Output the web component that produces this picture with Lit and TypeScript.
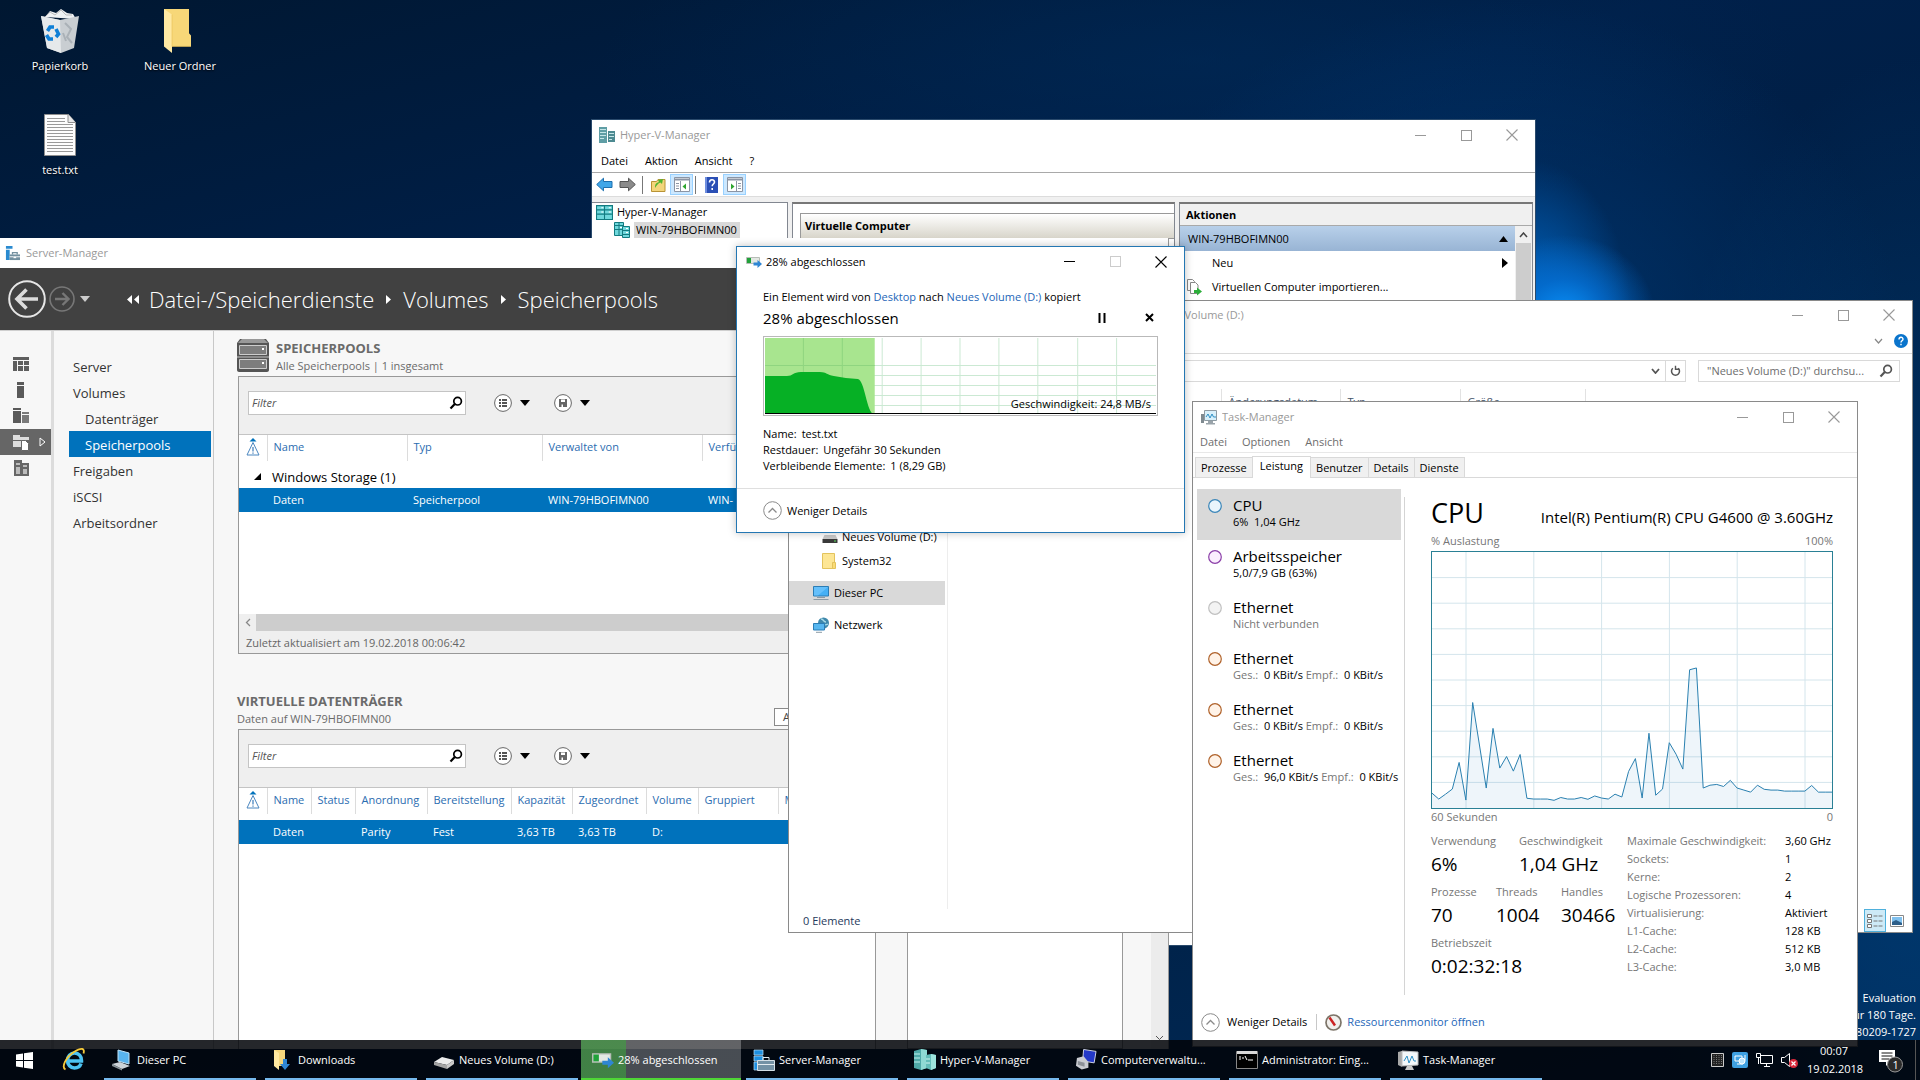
import { LitElement, html, css, svg, nothing } from "lit";
import { customElement } from "lit/decorators.js";
import { classMap } from "lit/directives/class-map.js";

/* ---------- shared styles ---------- */

const base = css`
  :host {
    display: block;
    box-sizing: border-box;
    font-family: "Open Sans", "Noto Sans", sans-serif;
    font-size: 11px;
    line-height: 16px;
    color: #000;
    cursor: default;
  }
  *, *::before, *::after { box-sizing: border-box; }
  button, input { font: inherit; color: inherit; margin: 0; border: 0; padding: 0; background: none; border-radius: 0; outline: none; }
  button { text-align: left; white-space: nowrap; }
  a { color: #1d66b8; text-decoration: none; }
  svg { display: block; flex: none; }
  table { border-collapse: collapse; border-spacing: 0; }
  th, td { padding: 0; text-align: left; font-weight: 400; white-space: nowrap; }
  ul { list-style: none; margin: 0; padding: 0; }
  h1, h2, h3, p, dl, dd, dt { margin: 0; font-weight: 400; font-size: inherit; }
  .titlebar { display: flex; align-items: center; height: 30px; color: #999; white-space: nowrap; }
  .titlebar .caption { flex: 1; overflow: hidden; }
  .controls { display: flex; }
  .controls button { width: 46px; height: 30px; display: grid; place-items: center; }
`;

const windowControls = (color: string, maxColor = color) => html`
  <div class="controls">
    <button aria-label="Minimieren"><svg width="11" height="11"><path d="M0 5.5H11" stroke=${color} fill="none" /></svg></button>
    <button aria-label="Maximieren"><svg width="11" height="11"><rect x=".5" y=".5" width="10" height="10" stroke=${maxColor} fill="none" /></svg></button>
    <button aria-label="Schließen"><svg width="12" height="12"><path d="M.5 .5L11.5 11.5M11.5 .5L.5 11.5" stroke=${color} stroke-width="1.1" fill="none" /></svg></button>
  </div>`;

const chevronCircle = html`<svg width="19" height="19" viewBox="0 0 19 19"><circle cx="9.5" cy="9.5" r="8.8" fill="#fff" stroke="#8a8a8a" /><path d="M5.500 11.500l4-4 4 4" fill="none" stroke="#8a8a8a" stroke-width="1.3" /></svg>`;

/* ---------- icons ---------- */

const hyperVIcon = (s: number) => html`<svg width=${s} height=${s} viewBox="0 0 16 16">
  <path d="M0 0h8v16H0z" fill="#5f9ea5" /><path d="M1 2h6v1H1zm0 3h6v1H1zm0 3h6v1H1zm0 3h4v1H1z" fill="#c5e6e8" />
  <path d="M9 4h7v11H9z" fill="#4d8a91" /><path d="M10 6h5v1h-5zm0 3h5v1h-5zm0 3h3v1h-3z" fill="#c5e6e8" /></svg>`;

const serverIcon = (s: number) => html`<svg width=${s} height=${s} viewBox="0 0 16 16">
  <path d="M1 0h7v3H1zM1 4h4v11H1z" fill="#2a8ad0" /><path d="M5 9h11v6H5z" fill="#73909f" />
  <path d="M8 9V7h5v2" fill="none" stroke="#73909f" stroke-width="1.4" /><path d="M5 11.500h4m3 0h4" stroke="#fff" /><path d="M9 11h3v2H9z" fill="#fff" /></svg>`;

const copyIcon = (w: number) => html`<svg width=${w} height=${w} viewBox="0 0 16 16">
  <path d="M.5 3.500h13v6H.5z" fill="#e3e8e3" stroke="#b7bdb7" /><path d="M1 4h4v5H1z" fill="#21a23a" />
  <path d="M7.500 8.500h4V6l4.500 4-4.500 4v-2.500h-4z" fill="#2f86d4" /></svg>`;

const folderIcon = (w: number, h: number) => html`<svg width=${w} height=${h} viewBox="0 0 28 40" preserveAspectRatio="none">
  <path d="M0 0h25v22l2 2v10H8z" fill="#f7d778" /><path d="M0 0l8 5v35l-8-6z" fill="#ffe9a3" /><path d="M8 5v29h19" fill="none" stroke="#e9bf55" stroke-width=".6" /></svg>`;

const smallFolderIcon = html`<svg width="14" height="16" viewBox="0 0 14 16"><path d="M.5 .5h12v15H.5z" fill="#fde694" stroke="#e3c35c" /><path d="M10.500 9.500h3v6h-3z" fill="#fbdc76" stroke="#e3c35c" /></svg>`;

const magnifier = (color: string) => html`<svg width="14" height="14" viewBox="0 0 14 14"><circle cx="8.600" cy="5.200" r="3.800" fill="none" stroke=${color} stroke-width="1.7" /><path d="M5.800 8L1.500 12.500" stroke=${color} stroke-width="2.2" /></svg>`;

const monitorIcon = html`<svg width="16" height="16" viewBox="0 0 16 16"><path d="M.5 1.500h15v9.500H.5z" fill="#45b0f5" stroke="#2b7db5" /><path d="M1 2h14L5 10.500H1z" fill="#7ccbff" opacity=".6" /><path d="M4 12.500h8M.5 14.500h15" stroke="#8d9ba5" /></svg>`;

const networkIcon = html`<svg width="16" height="16" viewBox="0 0 16 16"><circle cx="10.500" cy="6" r="5.500" fill="#3f88ab" /><path d="M8 2c3 0 2 3 5 3m-5 3c3-1 4 1 7-1" stroke="#a8dbe8" fill="none" stroke-width="1.4" /><path d="M.5 6.500h11v6.500H.5z" fill="#57b7f0" stroke="#2b7db5" /><path d="M3 15.300h6" stroke="#8d9ba5" /></svg>`;

const driveIcon = (s: number) => html`<svg width=${s} height=${s} viewBox="0 0 16 16"><path d="M2.500 6h11l2 4H.5z" fill="#c9c9c9" /><path d="M.5 10h15v4H.5z" fill="#3a3a3a" /><path d="M12 12h2" stroke="#5fe05f" stroke-width="1.2" /></svg>`;

const taskMgrIcon = (s: number) => html`<svg width=${s} height=${s} viewBox="0 0 16 16"><path d="M0 5h3v9H0z" fill="#7f8a90" /><path d="M3.500 1.500h12v10h-12z" fill="#d8f0fb" stroke="#8d9aa2" /><path d="M5 8l2-3 2 4 2-4 1.500 3H15" fill="none" stroke="#2d8fc4" /><path d="M7 12h5v2h2v1.500H5V14h2z" fill="#9aa4aa" /></svg>`;

/* ---------- Hyper-V manager ---------- */

@customElement("hyperv-manager")
export class HyperVManager extends LitElement {
  static styles = [base, css`
    :host { background: #f0f0f0; display: flex; flex-direction: column; border: 1px solid #2a4a6c; }
    .titlebar, .menu, .tools { background: #fff; }
    .titlebar { padding-left: 7px; gap: 5px; }
    .menu { display: flex; height: 23px; align-items: center; gap: 17px; padding-left: 9px; border-bottom: 1px solid #a9a9a9; }
    .tools { display: flex; height: 24px; align-items: center; padding-left: 1px; border-bottom: 1px solid #dcdcdc; }
    .tools button { width: 23px; height: 21px; display: grid; place-items: center; }
    .tools .on { background: #cce8ff; border: 1px solid #99d1ff; }
    .rule { width: 1px; height: 18px; background: #777; margin: 0 4px 0 3px; }
    .rule.tight { margin: 0 4px 0 2px; }
    .panes { display: flex; flex: 1; gap: 4px; padding-top: 5px; }
    .tree { width: 196px; background: #fff; border: 1px solid #828790; border-left: 0; }
    .tree li { display: flex; align-items: center; gap: 4px; height: 18px; padding-left: 4px; }
    .tree li.child { padding-left: 22px; }
    .tree .sel { background: #d9d9d9; padding: 0 3px 0 2px; }
    .middle { flex: 1; background: #fff; border: 1px solid #828790; border-top: 2px solid #777; padding: 9px 0 0 7px; }
    .band { height: 26px; border: 1px solid #999; border-right: 0; background: linear-gradient(#fff, #d8d5ca); font-weight: 700; padding: 4px; }
    .inner { height: 20px; margin-right: 5px; border-right: 1px solid #999; }
    .actions { width: 354px; background: #fff; border: 1px solid #828790; border-top: 2px solid #777; margin-right: 2px; display: flex; flex-direction: column; }
    .head { height: 22px; background: #f0f0f0; border-bottom: 1px solid #a9a9a9; padding: 3px 6px; font-weight: 700; }
    .cols { display: flex; flex: 1; }
    .list { flex: 1; }
    .list button { display: flex; align-items: center; width: 100%; height: 24px; padding: 0 7px 0 6px; gap: 10px; }
    .list .host { height: 25px; background: linear-gradient(#b8d0ea, #98b4d4); padding-left: 8px; }
    .list span { flex: 1; }
    .list .plain { padding-left: 32px; }
    .scroll { width: 17px; background: #cdcdcd; border: 1px solid #f0f0f0; }
    .up { height: 16px; background: #f0f0f0; display: grid; place-items: center; }
    .status { height: 20px; background: #fff; }
  `];

  render() {
    const cabinet = (w: number) => html`<svg width=${w} height=${w} viewBox="0 0 16 16"><path d="M.5 1.500h7.500v13H.5zM8 1.500h7.500v13H8z" fill="#6fd8dc" stroke="#127b80" /><path d="M1 5.500h14M1 9.500h14" stroke="#127b80" /><path d="M5 3.500h2m5 0h2M5 7.500h2m5 0h2" stroke="#fff" /></svg>`;
    const cabinets = html`<svg width="16" height="16" viewBox="0 0 16 16"><path d="M.5 .5h9v13h-9z" fill="#6fd8dc" stroke="#127b80" /><path d="M1 3.500h8M1 7.500h8M5 1v12" stroke="#127b80" /><path d="M8.500 4.500h7v11h-7z" fill="#6fd8dc" stroke="#127b80" /><path d="M9 8.500h6M9 12.500h6" stroke="#127b80" /><path d="M12 6.500h2M12 10.500h2M6 5.500h2" stroke="#fff" /></svg>`;
    const paneIcon = (left: boolean) => html`<svg width="16" height="15" viewBox="0 0 16 15"><path d="M.5 .5h15v14H.5z" fill="#fff" stroke="#8b95a5" /><path d="M1 2.500h14" stroke="#8b95a5" stroke-width="2" /><path d=${left ? "M6.500 4v10" : "M9.500 4v10"} stroke="#8b95a5" /><path d=${left ? "M2 6.500h3M2 9h3M2 11.500h3" : "M11 6.500h3M11 9h3M11 11.500h3"} stroke="#8b95a5" /><path d=${left ? "M12 6.500v6L8.500 9.500z" : "M4 6.500v6l3.500-3z"} fill="#2fa52f" /></svg>`;
    return html`
      <div class="titlebar">${hyperVIcon(16)}<span class="caption">Hyper-V-Manager</span>${windowControls("#999")}</div>
      <div class="menu"><button>Datei</button><button>Aktion</button><button>Ansicht</button><button>?</button></div>
      <div class="tools">
        <button aria-label="Zurück"><svg width="17" height="15" viewBox="0 0 17 15"><path d="M.7 7.500L7.500 1.200V4.500h8.500v6H7.500v3.300z" fill="#3fa6e8" stroke="#1c6fae" /></svg></button>
        <button aria-label="Vorwärts"><svg width="17" height="15" viewBox="0 0 17 15"><path d="M16.300 7.500L9.500 1.200V4.500H1v6h8.500v3.300z" fill="#8b8b8b" stroke="#555" /></svg></button>
        <span class="rule"></span>
        <button aria-label="Nach oben"><svg width="15" height="15" viewBox="0 0 15 15"><path d="M.5 4.500h5l1.500-2h7v12H.5z" fill="#f3d57c" stroke="#b99335" /><path d="M4 11c0-4 1-5 4-6L7 3l5-1-1 5-1.500-1.500C7 6.500 6 8 4 11z" fill="#4fb52f" /></svg></button>
        <button class="on" aria-label="Konsolenstruktur">${paneIcon(true)}</button>
        <span class="rule tight"></span>
        <button aria-label="Hilfe"><svg width="13" height="16" viewBox="0 0 13 16"><path d="M0 0h13v16H0z" fill="#2a4fb5" /><path d="M0 0h2v16H0z" fill="#6f8ede" /><path d="M4.500 5.500c0-3.500 5-3.500 5-.5 0 2-2.300 2-2.300 4.200M7.200 11v2" stroke="#fff" stroke-width="1.600" fill="none" /></svg></button>
        <button class="on" aria-label="Aktionsbereich">${paneIcon(false)}</button>
      </div>
      <div class="panes">
        <ul class="tree">
          <li>${cabinet(17)}Hyper-V-Manager</li>
          <li class="child">${cabinets}<span class="sel">WIN-79HBOFIMN00</span></li>
        </ul>
        <div class="middle"><h2 class="band">Virtuelle Computer</h2><div class="inner"></div></div>
        <div class="actions">
          <h2 class="head">Aktionen</h2>
          <div class="cols">
            <div class="list">
              <button class="host"><span>WIN-79HBOFIMN00</span><svg width="9" height="6"><path d="M0 6h9L4.500 0z" /></svg></button>
              <button class="plain"><span>Neu</span><svg width="6" height="10"><path d="M0 0v10l6-5z" /></svg></button>
              <button><svg width="16" height="17" viewBox="0 0 16 17"><path d="M1.500 .5h5l2 2v9h-7z" fill="#fff" stroke="#888" /><path d="M4.500 3.500h5l2.500 2.500v8.500H4.500z" fill="#fff" stroke="#888" /><path d="M8 11h3V8.500l5 4-5 4V14H8z" fill="#2cae3a" /></svg><span>Virtuellen Computer importieren...</span></button>
            </div>
            <div class="scroll"><div class="up"><svg width="9" height="6"><path d="M1 5l3.500-4L8 5" fill="none" stroke="#444" stroke-width="1.500" /></svg></div></div>
          </div>
        </div>
      </div>
      <div class="status"></div>`;
  }
}

/* ---------- Server manager ---------- */

interface NavItem { label: string; sub?: boolean; active?: boolean; }

const NAV: NavItem[] = [
  { label: "Server" }, { label: "Volumes" }, { label: "Datenträger", sub: true },
  { label: "Speicherpools", sub: true, active: true }, { label: "Freigaben" },
  { label: "iSCSI" }, { label: "Arbeitsordner" },
];

@customElement("server-manager")
export class ServerManager extends LitElement {
  static styles = [base, css`
    :host { background: #f7f7f7; display: flex; flex-direction: column; border-right: 1px solid #999; overflow: hidden; }
    .titlebar { background: #fff; padding-left: 5px; gap: 6px; }
    .banner { height: 63px; background: #414141; display: flex; align-items: center; color: #f3f3f3; padding-left: 8px; border-bottom: 1px solid #cfcfcf; flex: none; }
    .history { display: flex; align-items: center; gap: 3px; width: 119px; }
    .crumbs { display: flex; align-items: center; gap: 12px; font-size: 22px; line-height: 32px; font-weight: 300; }
    .crumbs a { color: #fff; }
    .back { margin-right: -2px; }
    .body { display: flex; flex: 1; min-height: 0; }
    .rail { width: 54px; border-right: 3px solid #dcdcdc; padding-top: 20px; flex: none; }
    .rail button { display: flex; width: 100%; height: 26px; align-items: center; padding-left: 13px; gap: 10px; }
    .rail .active { background: #666; }
    .nav { width: 160px; border-right: 1px solid #c8c8c8; padding: 22px 2px 0 15px; flex: none; }
    .nav a { display: flex; align-items: center; height: 26px; padding: 1px 0 0 4px; font-size: 13px; color: #333; }
    .nav .sub { padding-left: 16px; }
    .nav .active { background: #0072bc; color: #fff; }
    .main { flex: 1; display: flex; padding: 7px 28px 0 24px; gap: 31px; min-width: 0; }
    .col { width: 638px; display: flex; flex-direction: column; gap: 37px; }
    .side { flex: 1; background: #fff; border: 1px solid #999; margin-top: 38px; }
    .head { display: flex; height: 38px; gap: 7px; align-items: flex-start; color: #6a6a6a; margin-left: -1px; }
    .head .names { flex: 1; line-height: 18px; padding-top: 1px; }
    .head h2 { font-size: 13px; font-weight: 700; line-height: 18px; }
    .head .tasks { border: 1px solid #8a8a8a; height: 18px; width: 102px; padding-left: 8px; margin-top: 17px; color: #444; line-height: 16px; background: #fff; }
    .panel { border: 1px solid #999; background: #fff; display: flex; flex-direction: column; }
    .panel.pools { height: 278px; }
    .panel.disks { height: 400px; }
    .filterbar { height: 58px; background: #efefef; border-bottom: 1px solid #c4c4c4; padding: 14px 9px 0; display: flex; align-items: flex-start; flex: none; }
    .filter { display: flex; align-items: center; width: 218px; height: 24px; background: #fff; border: 1px solid #c4c4c4; padding-right: 2px; }
    .filter input { flex: 1; min-width: 0; padding-left: 3px; font-style: italic; }
    .filter input::placeholder { color: #555; opacity: 1; }
    .menu { display: flex; align-items: center; gap: 8px; height: 24px; margin-left: 28px; }
    .menu + .menu { margin-left: 24px; }
    table { table-layout: fixed; width: 100%; }
    th { height: 26px; color: #2b6cb0; padding: 0 0 2px 6px; border-left: 1px solid #dcdcdc; overflow: hidden; }
    th:first-child { border-left: 0; padding-left: 7px; }
    td { height: 24px; padding-left: 6px; color: #fff; overflow: hidden; }
    .picked { background: #0072bc; }
    .group td { height: 27px; font-size: 13px; color: #000; padding: 4px 0 0 5px; }
    .gap td { height: 6px; padding: 0; }
    .scroll { display: flex; height: 17px; margin-top: auto; background: #cdcdcd; }
    .scroll span { width: 17px; background: #efefef; display: grid; place-items: center; }
    .foot { height: 22px; background: #efefef; color: #666; padding: 4px 7px 0; }
    .c0 { width: 28px; } .p1 { width: 140px; } .p2 { width: 135px; } .p3 { width: 160px; }
    .d1, .d2 { width: 44px; } .d3 { width: 72px; } .d4 { width: 84px; } .d5 { width: 61px; } .d6 { width: 74px; } .d7 { width: 52px; } .d8 { width: 80px; }
    .vscroll { width: 17px; background: #ececec; display: flex; align-items: flex-end; justify-content: center; padding-bottom: 8px; flex: none; }
  `];

  private filterBar(id: string) {
    const caret = html`<svg width="10" height="6"><path d="M0 0h10L5 6z" /></svg>`;
    return html`<div class="filterbar">
      <label class="filter" for=${id}><input id=${id} type="text" placeholder="Filter" aria-label="Filter" />${magnifier("#000")}</label>
      <button class="menu" aria-label="Ansicht"><svg width="18" height="18" viewBox="0 0 18 18"><circle cx="9" cy="9" r="8.400" fill="#fff" stroke="#666" /><path d="M5 6h2m1 0h5M5 9h2m1 0h5M5 12h2m1 0h5" stroke="#555" stroke-width="1.800" /></svg>${caret}</button>
      <button class="menu" aria-label="Abfrage speichern"><svg width="18" height="18" viewBox="0 0 18 18"><circle cx="9" cy="9" r="8.400" fill="#fff" stroke="#666" /><path d="M5 5h8v8H5z" fill="#666" /><path d="M7 5.500h4v2.500H7zM7.500 10.500h1.500V13H7.500z" fill="#fff" /></svg>${caret}</button>
    </div>`;
  }

  private warn = html`<svg width="14" height="18" viewBox="0 0 14 18"><path d="M3.500 3.500L7 0l3.500 3.500z" fill="#0072bc" /><path d="M7 4.500l6 12.500H1z" fill="none" stroke="#4a86bf" /><path d="M7 9v4.500M7 14.500v1.200" stroke="#4a86bf" stroke-width="1.300" /></svg>`;

  render() {
    const arrow = html`<svg width="5" height="9" viewBox="0 0 5 9"><path d="M0 0v9l5-4.500z" fill="#fff" /></svg>`;
    const rail = [
      svg`<path d="M0 1h16v3H0zM0 5h4v10H0zM5 5h5v4H5zM11 5h5v4h-5zM5 10h5v5H5zM11 10h5v5h-5z" fill="#5e5e5e"/>`,
      svg`<path d="M4 0h7v3H4zM4 4h7v12H4z" fill="#5a5a5a"/>`,
      svg`<path d="M0 0h8v2H0zM0 3h8v12H0z" fill="#5a5a5a"/><path d="M9 4h7v2H9zM9 7h7v8H9z" fill="#7a7a7a"/>`,
      svg`<path d="M0 1h7v2h9v3H0zM0 7h8v6H0z" fill="#ddd"/><path d="M8.500 6.500h4l3 3v7h-7z" fill="#fff" stroke="#666"/>`,
      svg`<path d="M1 0h8v3h7v13H1z" fill="#666"/><path d="M3 3h4v2H3zM3 7h4v7H3zM10 5h4v2h-4zM10 9h4v5h-4z" fill="#bbb"/>`,
    ];
    return html`
      <div class="titlebar">${serverIcon(15)}<span class="caption">Server-Manager</span></div>
      <div class="banner">
        <div class="history">
          <button aria-label="Zurück"><svg width="38" height="38" viewBox="0 0 38 38"><circle cx="19" cy="19" r="17.800" fill="none" stroke="#e6e6e6" stroke-width="2" /><path d="M9 19h21M18.500 9.500L9 19l9.500 9.500" fill="none" stroke="#dcdcdc" stroke-width="3.600" /></svg></button>
          <button aria-label="Vorwärts"><svg width="26" height="26" viewBox="0 0 26 26"><circle cx="13" cy="13" r="12" fill="none" stroke="#777" stroke-width="1.600" /><path d="M6 13h13M13.500 7l6 6-6 6" fill="none" stroke="#777" stroke-width="2.400" /></svg></button>
          <button aria-label="Verlauf"><svg width="14" height="7"><path d="M2 0h10L7 6z" fill="#ccc" /></svg></button>
        </div>
        <nav class="crumbs">
          <svg class="back" width="12" height="9" viewBox="0 0 12 9"><path d="M5 0v9L0 4.500zM12 0v9L7 4.500z" fill="#fff" /></svg>
          <a href="#">Datei-/Speicherdienste</a>${arrow}<a href="#">Volumes</a>${arrow}<a href="#">Speicherpools</a>
        </nav>
      </div>
      <div class="body">
        <div class="rail">${rail.map((icon, i) => html`<button class=${i === 3 ? "active" : ""} aria-label="Bereich ${i + 1}"><svg width="16" height="17" viewBox="0 0 16 17">${icon}</svg>${i === 3 ? html`<svg width="7" height="10"><path d="M1 1v8l5-4z" fill="none" stroke="#fff" /></svg>` : nothing}</button>`)}</div>
        <nav class="nav">${NAV.map((n) => html`<a href="#" class=${classMap({ sub: !!n.sub, active: !!n.active })}>${n.label}</a>`)}</nav>
        <div class="main">
          <div class="col">
            <section>
              <div class="head">
                <svg width="32" height="34" viewBox="0 0 32 34"><path d="M3 1h26l3 4v27c0 1-1 2-2 2H2c-1 0-2-1-2-2V5z" fill="#555" /><path d="M5 1h22l4 4H1z" fill="#999" /><path d="M2.500 7.500h27v9h-27zM2.500 21.500h27v9h-27z" fill="#7d7d7d" stroke="#ccc" /><path d="M25 10h2v2h-2zM25 24h2v2h-2z" fill="#fff" /><path d="M0 19h32" stroke="#f7f7f7" stroke-width=".7" /></svg>
                <div class="names"><h2>SPEICHERPOOLS</h2><p>Alle Speicherpools | 1 insgesamt</p></div>
              </div>
              <div class="panel pools">
                ${this.filterBar("filter-pools")}
                <table>
                  <colgroup><col class="c0" /><col class="p1" /><col class="p2" /><col class="p3" /><col /></colgroup>
                  <thead><tr><th>${this.warn}</th><th>Name</th><th>Typ</th><th>Verwaltet von</th><th>Verfü</th></tr></thead>
                  <tbody>
                    <tr class="group"><td><svg width="18" height="8" viewBox="0 0 18 8"><path d="M17 0v7h-7z" /></svg></td><td colspan="4">Windows Storage (1)</td></tr>
                    <tr class="picked"><td></td><td>Daten</td><td>Speicherpool</td><td>WIN-79HBOFIMN00</td><td>WIN-</td></tr>
                  </tbody>
                </table>
                <div class="scroll"><span><svg width="6" height="9"><path d="M5 1L1.500 4.500 5 8" fill="none" stroke="#888" stroke-width="1.300" /></svg></span></div>
                <div class="foot">Zuletzt aktualisiert am 19.02.2018 00:06:42</div>
              </div>
            </section>
            <section>
              <div class="head">
                <div class="names"><h2>VIRTUELLE DATENTRÄGER</h2><p>Daten auf WIN-79HBOFIMN00</p></div>
                <button class="tasks">AUFGABEN</button>
              </div>
              <div class="panel disks">
                ${this.filterBar("filter-disks")}
                <table>
                  <colgroup><col class="c0" /><col class="d1" /><col class="d2" /><col class="d3" /><col class="d4" /><col class="d5" /><col class="d6" /><col class="d7" /><col class="d8" /><col /></colgroup>
                  <thead><tr><th>${this.warn}</th>${["Name", "Status", "Anordnung", "Bereitstellung", "Kapazität", "Zugeordnet", "Volume", "Gruppiert", "Mit"].map((t) => html`<th>${t}</th>`)}</tr></thead>
                  <tbody>
                    <tr class="gap"><td colspan="10"></td></tr>
                    <tr class="picked">${["", "Daten", "", "Parity", "Fest", "3,63 TB", "3,63 TB", "D:", "", ""].map((t) => html`<td>${t}</td>`)}</tr>
                  </tbody>
                </table>
              </div>
            </section>
          </div>
          <div class="side"></div>
        </div>
        <div class="vscroll"><svg width="9" height="6"><path d="M1 1l3.500 3.500L8 1" fill="none" stroke="#555" /></svg></div>
      </div>`;
  }
}

/* ---------- Explorer ---------- */

@customElement("explorer-window")
export class ExplorerWindow extends LitElement {
  static styles = [base, css`
    :host { background: #fff; border: 1px solid #8a8a8a; display: flex; flex-direction: column; }
    .titlebar { padding-left: 360px; height: 28px; }
    .ribbon { height: 25px; display: flex; justify-content: flex-end; align-items: center; gap: 11px; padding-right: 4px; border-bottom: 1px solid #dadada; }
    .location { display: flex; gap: 12px; padding: 6px 12px 7px; }
    .field { display: flex; align-items: center; height: 22px; border: 1px solid #d9d9d9; }
    .address { flex: 1; }
    .address input { flex: 1; height: 20px; }
    .address .reload { width: 20px; height: 20px; margin-left: 5px; border-left: 1px solid #d9d9d9; display: grid; place-items: center; }
    .search { width: 202px; padding: 0 6px 0 8px; }
    .search input { flex: 1; min-width: 0; }
    .search input::placeholder { color: #6d6d6d; opacity: 1; }
    .body { display: flex; flex: 1; }
    .tree { width: 159px; border-right: 1px solid #ededed; padding: 136px 2px 0 0; }
    .tree li { display: flex; align-items: center; height: 24px; gap: 5px; padding-left: 24px; margin-bottom: 8px; }
    .tree .sub { padding-left: 33px; margin-bottom: 0; gap: 4px; }
    .tree .last { margin-bottom: 8px; gap: 6px; }
    .tree .sel { background: #d9d9d9; }
    .files { flex: 1; padding-left: 24px; }
    table { table-layout: fixed; width: 614px; color: #44546a; }
    th { height: 26px; border-right: 1px solid #e2e2e2; padding-left: 7px; }
    .name { width: 249px; } .date { width: 119px; } .type { width: 120px; }
    .status { display: flex; height: 23px; align-items: center; padding-left: 14px; color: #1e395b; }
    .status span { flex: 1; }
    .status button { width: 22px; height: 23px; display: grid; place-items: center; }
    .status .on { border: 1px solid #4fb0dc; background: #cdeaf7; }
    .status .last { width: 26px; padding-right: 4px; }
  `];

  render() {
    return html`
      <div class="titlebar"><span class="caption">Neues Volume (D:)</span>${windowControls("#999")}</div>
      <div class="ribbon">
        <svg width="9" height="6"><path d="M1 1l3.500 4L8 1" fill="none" stroke="#888" stroke-width="1.200" /></svg>
        <svg width="14" height="14" viewBox="0 0 14 14"><circle cx="7" cy="7" r="7" fill="#0a74cc" /><path d="M5 5.500c0-3 4-3 4-.3 0 1.600-2 1.600-2 3.300M7 9.800v1.500" fill="none" stroke="#fff" stroke-width="1.400" /></svg>
      </div>
      <div class="location">
        <div class="field address"><input type="text" aria-label="Adresse" />
          <svg width="9" height="6"><path d="M1 1l3.500 4L8 1" fill="none" stroke="#555" stroke-width="1.800" /></svg>
          <button class="reload" aria-label="Aktualisieren"><svg width="11" height="12" viewBox="0 0 11 12"><path d="M8.200 3.200a4 4 0 1 1-5.400 0" fill="none" stroke="#555" stroke-width="1.500" /><path d="M5.500 .8v3.500h3.800" fill="none" stroke="#555" stroke-width="1.400" /></svg></button>
        </div>
        <label class="field search"><input type="text" aria-label="Suchen" placeholder='"Neues Volume (D:)" durchsu...' />${magnifier("#555")}</label>
      </div>
      <div class="body">
        <ul class="tree">
          <li class="sub">${driveIcon(16)}Neues Volume (D:)</li>
          <li class="sub last">${smallFolderIcon}System32</li>
          <li class="sel">${monitorIcon}Dieser PC</li>
          <li>${networkIcon}Netzwerk</li>
        </ul>
        <div class="files">
          <table><colgroup><col class="name" /><col class="date" /><col class="type" /><col /></colgroup>
            <thead><tr><th></th><th>Änderungsdatum</th><th>Typ</th><th>Größe</th></tr></thead></table>
        </div>
      </div>
      <div class="status"><span>0 Elemente</span>
        <button class="on" aria-label="Details"><svg width="16" height="14" viewBox="0 0 16 14"><path d="M.5 .5h4v3h-4zM.5 5.500h4v3h-4zM.5 10.500h4v3h-4z" fill="#fff" stroke="#777" /><path d="M6.500 2h4m1 0h4M6.500 7h4m1 0h4M6.500 12h4m1 0h4" stroke="#777" /></svg></button>
        <button class="last" aria-label="Kacheln"><svg width="14" height="12" viewBox="0 0 14 12"><path d="M.5 .5h13v11H.5z" fill="#fff" stroke="#888" /><path d="M2 2h10v8H2z" fill="#7fc0ee" /><path d="M2 7l4-2 6 3v2H2z" fill="#2e5f8a" /></svg></button>
      </div>`;
  }
}

/* ---------- Task manager ---------- */

const CPU_LOAD = [5.8, 3.5, 5.4, 7.4, 17.8, 3.1, 41.2, 24.6, 7.8, 31.1, 15.6, 20.1, 14.4, 20.9, 3.8, 3.5, 3.5, 3.5, 3, 4.1,
  3.5, 3.5, 4.1, 3.4, 4.7, 3.9, 3.5, 5.4, 4.3, 14.3, 19.3, 3.9, 29.2, 5, 7.4, 25.5, 21, 15.2, 54, 54.7,
  7.8, 8.9, 9.2, 8.4, 10.8, 7.8, 7, 6.2, 8.9, 7.3, 7, 7, 6.6, 6.6, 6.6, 6.6, 8.8, 6.2, 6.2, 6.2];

const SPECS: [string, string][] = [
  ["Maximale Geschwindigkeit:", "3,60 GHz"], ["Sockets:", "1"], ["Kerne:", "2"], ["Logische Prozessoren:", "4"],
  ["Virtualisierung:", "Aktiviert"], ["L1-Cache:", "128 KB"], ["L2-Cache:", "512 KB"], ["L3-Cache:", "3,0 MB"],
];

@customElement("task-manager")
export class TaskManager extends LitElement {
  static styles = [base, css`
    :host { background: #fff; border: 1px solid #8a8a8a; display: flex; flex-direction: column; }
    .titlebar { padding-left: 8px; gap: 5px; }
    .menu { display: flex; gap: 15px; height: 21px; align-items: center; padding-left: 7px; color: #6d6d6d; border-bottom: 1px solid #e8e8e8; }
    .tabs { display: flex; align-items: flex-end; height: 25px; padding-left: 2px; border-bottom: 1px solid #d9d9d9; }
    .tabs button { height: 20px; padding: 0 5px; border: 1px solid #d9d9d9; border-bottom: 0; background: #f0f0f0; margin-right: -1px; }
    .tabs .active { height: 22px; padding: 0 7px 3px; background: #fff; margin-bottom: -1px; }
    .body { display: flex; flex: 1; padding-top: 11px; }
    .list { width: 204px; margin-left: 4px; }
    .list button { display: flex; width: 100%; height: 51px; gap: 11px; padding: 7px 0 0 11px; align-items: flex-start; }
    .list .active { background: #d9d9d9; }
    .list h3 { font-size: 15px; line-height: 18px; }
    .list p { white-space: nowrap; line-height: 16px; }
    .list svg { margin-top: 3px; }
    .muted { color: #767676; }
    .detail { flex: 1; margin: 8px 0 3px 3px; border-left: 1px solid #d4d4d4; padding: 0 24px 0 26px; }
    .top { display: flex; justify-content: space-between; align-items: baseline; line-height: 32px; font-size: 15px; }
    .top h2 { font-size: 27px; }
    .legend { display: flex; justify-content: space-between; color: #767676; line-height: 16px; }
    .chart { width: 100%; height: 258px; border: 1px solid #2a8095; margin-top: 2px; }
    .stats { display: flex; margin-top: 8px; }
    .group { width: 196px; }
    .row { display: flex; height: 51px; }
    .row dl { min-width: 65px; white-space: nowrap; }
    .row.wide dl { min-width: 88px; }
    .row dd { font-size: 19px; line-height: 30px; }
    dt, th { color: #767676; }
    table { height: 144px; }
    td, th { height: 18px; padding-bottom: 2px; }
    th { width: 158px; }
    .foot { display: flex; align-items: center; height: 48px; padding-left: 8px; gap: 8px; }
    .foot button, .foot a { display: flex; align-items: center; gap: 7px; }
    .foot a { border-left: 1px solid #c8c8c8; padding-left: 8px; gap: 5px; margin-left: 1px; height: 16px; }
  `];

  private ring(stroke: string, fill: string) {
    return html`<svg width="14" height="14" viewBox="0 0 14 14"><circle cx="7" cy="7" r="6.300" fill=${fill} stroke=${stroke} stroke-width="1.200" /></svg>`;
  }

  private eth(sent: string) {
    return html`<button>${this.ring("#b0622a", "#fff3e8")}<div><h3>Ethernet</h3><p><span class="muted">Ges.:</span>&nbsp; ${sent} KBit/s <span class="muted">Empf.:</span>&nbsp; 0 KBit/s</p></div></button>`;
  }

  render() {
    const step = 1000 / (CPU_LOAD.length - 1);
    const line = CPU_LOAD.map((v, i) => `${(i * step).toFixed(1)},${(100 - v).toFixed(1)}`).join(" ");
    return html`
      <div class="titlebar">${taskMgrIcon(16)}<span class="caption">Task-Manager</span>${windowControls("#999")}</div>
      <div class="menu"><button>Datei</button><button>Optionen</button><button>Ansicht</button></div>
      <div class="tabs" role="tablist">${["Prozesse", "Leistung", "Benutzer", "Details", "Dienste"].map((t) => html`<button role="tab" class=${t === "Leistung" ? "active" : ""}>${t}</button>`)}</div>
      <div class="body">
        <div class="list">
          <button class="active">${this.ring("#3b86b8", "#eaf5fc")}<div><h3>CPU</h3><p>6%&nbsp; 1,04 GHz</p></div></button>
          <button>${this.ring("#8b3fa8", "#fbeefe")}<div><h3>Arbeitsspeicher</h3><p>5,0/7,9 GB (63%)</p></div></button>
          <button>${this.ring("#c0c0c0", "#f3f3f3")}<div><h3>Ethernet</h3><p class="muted">Nicht verbunden</p></div></button>
          ${this.eth("0")}${this.eth("0")}${this.eth("96,0")}
        </div>
        <div class="detail">
          <div class="top"><h2>CPU</h2><span>Intel(R) Pentium(R) CPU G4600 @ 3.60GHz</span></div>
          <div class="legend"><span>% Auslastung</span><span>100%</span></div>
          <svg class="chart" viewBox="0 0 1000 100" preserveAspectRatio="none" role="img" aria-label="CPU-Auslastung">
            ${[1, 2, 3, 4, 5, 6, 7, 8, 9].map((i) => svg`<path d="M0 ${i * 10}H1000" stroke="#d4e5ec" vector-effect="non-scaling-stroke"/>`)}
            ${[0, 1, 2, 3, 4, 5].map((i) => svg`<path d="M${85 + i * 169.500} 0V100" stroke="#d4e5ec" vector-effect="non-scaling-stroke"/>`)}
            <polygon points="0,100 ${line} 1000,100" fill="#1178bb" fill-opacity=".07" />
            <polyline points=${line} fill="none" stroke="#2a80b0" vector-effect="non-scaling-stroke" />
          </svg>
          <div class="legend"><span>60 Sekunden</span><span>0</span></div>
          <div class="stats">
            <div class="group">
              <div class="row wide"><dl><dt>Verwendung</dt><dd>6%</dd></dl><dl><dt>Geschwindigkeit</dt><dd>1,04 GHz</dd></dl></div>
              <div class="row"><dl><dt>Prozesse</dt><dd>70</dd></dl><dl><dt>Threads</dt><dd>1004</dd></dl><dl><dt>Handles</dt><dd>30466</dd></dl></div>
              <div class="row"><dl><dt>Betriebszeit</dt><dd>0:02:32:18</dd></dl></div>
            </div>
            <table><tbody>${SPECS.map(([k, v]) => html`<tr><th scope="row">${k}</th><td>${v}</td></tr>`)}</tbody></table>
          </div>
        </div>
      </div>
      <div class="foot"><button>${chevronCircle}Weniger Details</button>
        <a href="#"><svg width="17" height="17" viewBox="0 0 17 17"><circle cx="8.500" cy="8.500" r="7.500" fill="#f1efec" stroke="#7c7468" stroke-width="1.700" /><path d="M4.500 3.500l5.500 8" stroke="#c22" stroke-width="2.400" /></svg>Ressourcenmonitor öffnen</a></div>`;
  }
}

/* ---------- Copy dialog ---------- */

@customElement("copy-dialog")
export class CopyDialog extends LitElement {
  static styles = [base, css`
    :host { background: #fff; border: 1px solid #2477b3; display: flex; flex-direction: column; }
    .titlebar { color: #000; padding-left: 9px; gap: 4px; height: 29px; }
    .content { flex: 1; padding: 13px 26px 0; }
    .status { display: flex; height: 25px; align-items: center; font-size: 15px; }
    .status h2 { flex: 1; font-size: 15px; }
    .status button { width: 20px; height: 20px; display: grid; place-items: center; margin-left: 27px; }
    .status .stop { margin-right: -1px; }
    .chart { position: relative; height: 80px; margin-top: 6px; border: 1px solid #b9b9b9; padding: 1px; }
    .chart svg { width: 100%; height: 100%; }
    .speed { position: absolute; right: 6px; bottom: 3px; }
    .facts { margin-top: 10px; }
    .facts dt { display: inline; margin-right: 5px; }
    .facts dd { display: inline; }
    .foot { height: 44px; border-top: 1px solid #dfdfdf; padding-left: 26px; display: flex; }
    .foot button { display: flex; align-items: center; gap: 5px; }
  `];

  render() {
    return html`
      <div class="titlebar">${copyIcon(16)}<span class="caption">28% abgeschlossen</span>${windowControls("#000", "#ccc")}</div>
      <div class="content">
        <p>Ein Element wird von <a href="#">Desktop</a> nach <a href="#">Neues Volume (D:)</a> kopiert</p>
        <div class="status"><h2>28% abgeschlossen</h2>
          <button aria-label="Anhalten"><svg width="8" height="10"><path d="M1.500 0v10M6.500 0v10" stroke="#000" stroke-width="2" /></svg></button>
          <button class="stop" aria-label="Abbrechen"><svg width="9" height="9"><path d="M1 1l7 7M8 1L1 8" stroke="#000" stroke-width="2" /></svg></button>
        </div>
        <div class="chart">
          <svg viewBox="0 0 392 76" preserveAspectRatio="none" role="img" aria-label="Geschwindigkeit">
            ${[1, 2, 3, 4, 5, 6, 7, 8, 9].map((i) => svg`<path d="M${Math.round(i * 39.200) - 0.500} 0V76" stroke="#cbe9d3"/>`)}
            ${[27.500, 37.500, 47.500, 57.500, 67.500].map((y) => svg`<path d="M0 ${y}H392" stroke="#cbe9d3"/>`)}
            <path d="M0 0h110v76H0z" fill="#a8e58f" />
            <path d="M38.500 0V76M77.500 0V76M0 27.500h110" stroke="#8fd580" />
            <path d="M0 38h22c6 0 6-4 14-4h19c7 0 7 3 14 4l12 2 12 1c7 1 9 34 16 35H0z" fill="#06b025" />
            <path d="M0 75.500H392" stroke="#000" />
          </svg>
          <span class="speed">Geschwindigkeit: 24,8 MB/s</span>
        </div>
        <div class="facts">
          <dl><dt>Name:</dt><dd>test.txt</dd></dl>
          <dl><dt>Restdauer:</dt><dd>Ungefähr 30 Sekunden</dd></dl>
          <dl><dt>Verbleibende Elemente:</dt><dd>1 (8,29 GB)</dd></dl>
        </div>
      </div>
      <div class="foot"><button>${chevronCircle}Weniger Details</button></div>`;
  }
}

/* ---------- Taskbar ---------- */

const TASKS = [
  { label: "Dieser PC", icon: html`<svg width="22" height="22" viewBox="0 0 22 22"><path d="M7 1l11 3v11L7 12z" fill="#58b4ee" stroke="#bfe2f7" /><path d="M1 15l8-2 10 4-8 3z" fill="#ccd3d8" /><path d="M1 15l10 5v1.500L1 17z" fill="#8a949b" /></svg>` },
  { label: "Downloads", icon: html`<svg width="22" height="22" viewBox="0 0 22 22"><path d="M2 1h11v16H6z" fill="#f5d67c" /><path d="M2 1l5 3v17l-5-4z" fill="#ffe8a0" /><path d="M11 10h4v5h3l-5 6-5-6h3z" fill="#2f86d4" /></svg>` },
  { label: "Neues Volume (D:)", icon: html`<svg width="22" height="22" viewBox="0 0 22 22"><path d="M1 13l8-5 12 3-7 5z" fill="#ececec" /><path d="M1 13l13 3v4L1 16z" fill="#a4a4a4" /><path d="M14 16l7-5v4l-7 5z" fill="#cacaca" /></svg>` },
  { label: "28% abgeschlossen", icon: copyIcon(22), busy: true },
  { label: "Server-Manager", icon: html`<svg width="22" height="22" viewBox="0 0 22 22"><path d="M1 1h9v5H1zM1 7h9v5H1zM1 13h9v8H1z" fill="#1c8fe0" stroke="#bfe0f5" stroke-width=".7" /><path d="M4.500 11.500h17v10h-17z" fill="#7392a5" stroke="#d3dfe6" /><path d="M10 11V8.500h6V11M5 15.500h16" fill="none" stroke="#e4ecf0" /></svg>` },
  { label: "Hyper-V-Manager", icon: html`<svg width="22" height="22" viewBox="0 0 22 22"><path d="M0 2l7-2 6 1v18l-6 2-7-2z" fill="#4fa9a8" /><path d="M7 0v21l6-2V1z" fill="#8fdad4" /><path d="M0 5h6M0 9h6M0 13h6" stroke="#bff0ec" /><path d="M12 6l5-1 5 1v13l-5 2-5-2z" fill="#63bdb9" /><path d="M17 5v16l5-2V6z" fill="#9de4dd" /><path d="M12 10h4M12 14h4" stroke="#d2f5f1" /></svg>` },
  { label: "Computerverwaltu...", icon: html`<svg width="22" height="22" viewBox="0 0 23 22"><path d="M9 0l13 2-2 12L8 12z" fill="#2439c8" stroke="#d5d8e8" /><path d="M2 9l7-2 5 6v6l-7 2-6-4z" fill="#c9ccd2" /><path d="M3 12l7 2v4l-7-2z" fill="#8c9198" /></svg>` },
  { label: "Administrator: Eing...", icon: html`<svg width="22" height="20" viewBox="0 0 22 20"><path d="M.5 1.500h21v17H.5z" fill="#000" stroke="#888" /><path d="M1 1h20v3H1z" fill="#d8d8d8" /><path d="M3 7h2M3 9h2M7 7v2M9 6l2 4M12 10h5" stroke="#fff" fill="none" /></svg>` },
  { label: "Task-Manager", icon: html`<svg width="22" height="22" viewBox="0 0 22 22"><path d="M1 3l4-1v16l-4-2z" fill="#a8a8a8" /><path d="M5 2l16 1v13L5 17z" fill="#f4f8fa" stroke="#bbb" /><path d="M7 12l3-5 2 7 3-7 2 5h2" fill="none" stroke="#2d8fc4" /><path d="M10 17h5l2 4H8z" fill="#c9c9c9" /></svg>` },
];

@customElement("task-bar")
export class TaskBar extends LitElement {
  static styles = [base, css`
    :host { background: rgba(1, 3, 8, 0.860); color: #fff; height: 40px; display: flex; align-items: stretch; }
    .start { width: 48px; display: grid; place-items: center; }
    .ie { width: 52px; display: grid; place-items: center; }
    .buttons { display: flex; gap: 1px; flex: 1; }
    .task { width: 160px; display: flex; align-items: center; gap: 4px; padding-left: 11px; position: relative; }
    .task::after { content: ""; position: absolute; left: 4px; right: 4px; bottom: 0; height: 2px; background: #76b9ed; }
    .busy { background: linear-gradient(90deg, rgba(92, 180, 92, 0.700) 28%, rgba(255, 255, 255, 0.280) 28%); margin-left: -2px; }
    .busy::after { left: 0; right: 0; background: #4fd636; }
    .tray { display: flex; align-items: center; gap: 8px; }
    .clock { text-align: center; line-height: 18px; width: 54px; }
    .note { width: 54px; padding-left: 13px; }
    .peek { width: 5px; border-left: 1px solid #555; }
  `];

  render() {
    return html`
      <button class="start" aria-label="Start"><svg width="17" height="17" viewBox="0 0 17 17"><path d="M0 2.500l7-1V8H0zM8 1.300L17 0v8H8zM0 9h7v6.500l-7-1zM8 9h9v8l-9-1.300z" fill="#fff" /></svg></button>
      <button class="ie" aria-label="Internet Explorer"><svg width="24" height="24" viewBox="0 0 24 24"><path d="M5.500 13h14c.3-5-3-8-7-8s-7 3.300-7 7.500 3 7.500 7 7.500c3 0 5.500-1.500 6.500-4.500" fill="none" stroke="#4cc3f2" stroke-width="3.600" /><path d="M3.500 21.500C-1 19 4 9 12 4s11-3.500 9.500 1.500" fill="none" stroke="#f5c93a" stroke-width="1.800" /></svg></button>
      <div class="buttons">${TASKS.map((t) => html`<button class=${classMap({ task: true, busy: !!t.busy })}>${t.icon}<span>${t.label}</span></button>`)}</div>
      <div class="tray">
        <svg width="13" height="14" viewBox="0 0 13 14"><path d="M.5 .5h12v13H.5z" fill="#222" stroke="#ccc" /><path d="M3 2v10M5.500 2v10M8 2v10M10.500 2v10" stroke="#777" stroke-dasharray="1 1" /></svg>
        <svg width="16" height="16" viewBox="0 0 16 16"><rect width="16" height="16" rx="2" fill="#3fa0e0" /><path d="M3 4h7v5H3zM5 12h6l2-4V3" fill="none" stroke="#fff" /><circle cx="10" cy="9" r="3" fill="#bfe6fb" stroke="#fff" /></svg>
        <svg width="17" height="16" viewBox="0 0 17 16"><path d="M4.500 3.500h12v8h-12zM8 14.500h6M10.500 12v2M.5 1.500h4v4h-4zM2.500 6v6" fill="none" stroke="#fff" /></svg>
        <svg width="18" height="17" viewBox="0 0 18 17"><path d="M.5 5.500h3l5-4v13l-5-4h-3z" fill="none" stroke="#fff" /><circle cx="12.500" cy="11.500" r="4.500" fill="#d8283a" /><path d="M10.500 9.500l4 4m0-4l-4 4" stroke="#fff" stroke-width="1.200" /></svg>
        <div class="clock"><div>00:07</div><div>19.02.2018</div></div>
      </div>
      <button class="note" aria-label="Benachrichtigungen"><svg width="30" height="28" viewBox="0 0 30 28"><path d="M5 4h16v12h-5l-4 4v-4H5z" fill="#fff" /><path d="M7.500 7h11M7.500 10h11M7.500 13h8" stroke="#111" /><circle cx="21" cy="18.500" r="7.500" fill="#2b2b2b" stroke="#999" /><text x="18.500" y="22.500" fill="#fff" font-size="11">1</text></svg></button>
      <div class="peek"></div>`;
  }
}

/* ---------- Desktop ---------- */

@customElement("app-root")
export class AppRoot extends LitElement {
  static styles = [base, css`
    :host {
      position: relative; height: 100vh; overflow: hidden;
      background:
        radial-gradient(ellipse 90px 80px at 1565px 315px, #0a90f8 0%, rgba(4, 110, 210, 0.800) 45%, rgba(4, 80, 160, 0) 100%),
        radial-gradient(ellipse 100px 150px at 1530px 310px, rgba(0, 110, 210, 0.850) 0%, rgba(0, 70, 150, 0) 100%),
        radial-gradient(ellipse 400px 330px at 1500px 330px, rgba(0, 66, 135, 0.600) 0%, rgba(0, 50, 110, 0) 100%),
        radial-gradient(ellipse 300px 700px at 100% 70%, rgba(0, 62, 120, 0.850) 0%, rgba(0, 40, 90, 0) 100%),
        radial-gradient(ellipse 600px 160px at 1200px 60px, rgba(0, 44, 90, 0.500) 0%, rgba(0, 40, 90, 0) 100%),
        linear-gradient(165deg, #001731 0%, #00204a 28%, #001d3f 60%, #002a58 100%);
    }
    .win { position: absolute; }
    .hyperv { left: 591px; top: 119px; width: 945px; height: 827px; }
    .server { left: 0; top: 238px; width: 1169px; height: 811px; }
    .explorer { left: 788px; top: 300px; width: 1125px; height: 633px; }
    .taskmgr { left: 1192px; top: 401px; width: 666px; height: 646px; }
    .copy { left: 736px; top: 246px; width: 449px; height: 287px; box-shadow: 0 0 8px rgba(0, 0, 0, 0.250); }
    .bar { position: absolute; left: 0; right: 0; bottom: 0; }
    .shortcut { position: absolute; width: 96px; display: flex; flex-direction: column; align-items: center; gap: 5px; color: #fff; text-shadow: 0 1px 2px #000; }
    .bin { left: 12px; top: 8px; }
    .folder { left: 132px; top: 8px; }
    .text { left: 12px; top: 112px; }
    .shortcut .pic { height: 45px; display: grid; place-items: center; }
    .folder .pic { padding-right: 4px; }
    .watermark { position: absolute; right: 4px; bottom: 40px; color: #fff; text-align: right; line-height: 17px; }
  `];

  render() {
    return html`
      <button class="shortcut bin"><span class="pic"><svg width="38" height="44" viewBox="0 0 38 44"><path d="M4 8l5-6 6 2 5-4 6 4 6 1 3 5z" fill="#eef1f3" /><path d="M0 7l19 4 19-4-5 32-13 5-14-5z" fill="#c9ced2" /><path d="M0 7l19 4 1 33-14-5z" fill="#e6e9eb" /><path d="M4 8l5-5 5 3 6-5 5 5 6 0" stroke="#bbb" fill="none" /><path d="M24 14l6 6-4 8 5 6M22 24l3 8" stroke="#aab1b7" fill="none" stroke-width="2" /><path d="M6.500 22l2.500-4 4 0M15 20l2.500 5-2.500 3M12 30l-4 0-2.500-4" fill="none" stroke="#0f7fd6" stroke-width="3.600" /></svg></span>Papierkorb</button>
      <button class="shortcut folder"><span class="pic">${folderIcon(28, 44)}</span>Neuer Ordner</button>
      <button class="shortcut text"><span class="pic"><svg width="32" height="42" viewBox="0 0 32 42"><path d="M.5 .5h24l7 8v33H.5z" fill="#fdfdfd" stroke="#8f8f8f" /><path d="M24 .5v8h7.500" fill="#e8e8e8" stroke="#8f8f8f" />${[4, 7].map((y) => svg`<path d="M3 ${y + 0.500}h18" stroke="#999"/>`)}${[10, 13, 16, 19, 22, 25, 28, 31, 34, 37].map((y) => svg`<path d="M3 ${y + 0.500}h26" stroke="#999"/>`)}</svg></span>test.txt</button>
      <div class="watermark">Evaluation<br />für 180 Tage.<br />180209-1727</div>
      <hyperv-manager class="win hyperv"></hyperv-manager>
      <server-manager class="win server"></server-manager>
      <explorer-window class="win explorer"></explorer-window>
      <task-manager class="win taskmgr"></task-manager>
      <copy-dialog class="win copy"></copy-dialog>
      <task-bar class="bar"></task-bar>`;
  }
}
